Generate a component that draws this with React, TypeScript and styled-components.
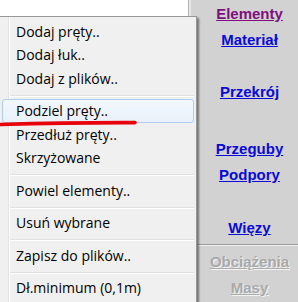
import React from 'react';
import styled, { createGlobalStyle } from 'styled-components';

const GlobalStyle = createGlobalStyle`
  html, body {
    margin: 0;
    padding: 0;
    background: #ffffff;
  }
`;

const Screen = styled.div`
  position: relative;
  width: 298px;
  height: 302px;
  overflow: hidden;
  display: flex;
  background: #ffffff;
`;

const Canvas = styled.div`
  width: 188px;
  flex: none;
  background: #ffffff;
`;

const SidePanel = styled.div`
  flex: 1;
  display: flex;
  flex-direction: column;
  padding: 1px 0 0 0;
  background: #d2d2d2;
  border-left: 1px solid #b4b4b4;
  box-shadow: inset 2px 0 0 #e6e6e6;
`;

const PanelLink = styled.a<{ $top?: number; $state?: 'visited' | 'disabled' }>`
  display: block;
  height: 26px;
  line-height: 26px;
  margin-top: ${(p) => p.$top ?? 0}px;
  padding-left: 12px;
  text-align: center;
  font-family: 'Liberation Sans', Arial, sans-serif;
  font-weight: bold;
  font-size: 15px;
  text-decoration: underline;
  color: ${(p) =>
    p.$state === 'visited' ? '#7f0f7f' : p.$state === 'disabled' ? '#a9a9a9' : '#0a0ad8'};
  text-shadow: ${(p) => (p.$state === 'disabled' ? '1px 1px 0 #f4f4f4' : 'none')};
  cursor: pointer;
`;

const PanelRule = styled.div`
  height: 1px;
  margin: 3px 0 3px 0;
  background: #9a9a9a;
  border-bottom: 1px solid #f2f2f2;
`;

const Menu = styled.div`
  position: absolute;
  top: 16px;
  left: -1px;
  width: 198px;
  box-sizing: border-box;
  padding: 2.5px 2px 3px 2px;
  background: #f0f0f0;
  border: 1px solid #979797;
  box-shadow: 2px 2px 2px rgba(0, 0, 0, 0.45);
  font-family: 'Open Sans', 'Segoe UI', sans-serif;
  font-size: 14px;
  color: #000000;

  &::before {
    content: '';
    position: absolute;
    top: 0;
    bottom: 0;
    left: 8px;
    width: 1px;
    background: #e2e3e3;
    box-shadow: 1px 0 0 #ffffff;
  }
`;

const MenuItem = styled.div<{ $hot?: boolean }>`
  position: relative;
  height: 23.5px;
  line-height: 23.5px;
  padding-left: 13px;
  box-sizing: border-box;
  white-space: nowrap;
  border: 1px solid ${(p) => (p.$hot ? '#b1cdee' : 'transparent')};
  border-radius: 3px;
  background: ${(p) => (p.$hot ? 'linear-gradient(#f4f8fd, #e8f0fa)' : 'transparent')};
  line-height: 21.5px;
`;

const MenuSeparator = styled.div`
  height: 1px;
  margin: 4.5px 0 2.5px 8px;
  background: #e0e0e0;
  border-bottom: 1px solid #ffffff;
`;

const Annotation = styled.svg`
  position: absolute;
  left: 0;
  top: 0;
  pointer-events: none;
`;

type Entry = { label: string; hot?: boolean } | 'sep';

const entries: Entry[] = [
  { label: 'Dodaj pręty..' },
  { label: 'Dodaj łuk..' },
  { label: 'Dodaj z plików..' },
  'sep',
  { label: 'Podziel pręty..', hot: true },
  { label: 'Przedłuż pręty..' },
  { label: 'Skrzyżowane' },
  'sep',
  { label: 'Powiel elementy..' },
  'sep',
  { label: 'Usuń wybrane' },
  'sep',
  { label: 'Zapisz do plików..' },
  'sep',
  { label: 'Dł.minimum (0,1m)' },
];

export default function App() {
  return (
    <>
      <GlobalStyle />
      <Screen>
        <Canvas />
        <SidePanel>
          <PanelLink $state="visited">Elementy</PanelLink>
          <PanelLink>Materiał</PanelLink>
          <PanelLink $top={26}>Przekrój</PanelLink>
          <PanelLink $top={31}>Przeguby</PanelLink>
          <PanelLink>Podpory</PanelLink>
          <PanelLink $top={27}>Więzy</PanelLink>
          <PanelRule />
          <PanelLink $state="disabled">Obciążenia</PanelLink>
          <PanelLink $state="disabled">Masy</PanelLink>
        </SidePanel>

        <Menu>
          {entries.map((e, i) =>
            e === 'sep' ? (
              <MenuSeparator key={i} />
            ) : (
              <MenuItem key={i} $hot={e.hot}>
                {e.label}
              </MenuItem>
            )
          )}
        </Menu>

        <Annotation width="298" height="302" viewBox="0 0 298 302">
          <path
            d="M0 124.5 Q 70 122.4 135 122.6"
            fill="none"
            stroke="#e8000b"
            strokeWidth="3.6"
            strokeLinecap="round"
          />
        </Annotation>
      </Screen>
    </>
  );
}
